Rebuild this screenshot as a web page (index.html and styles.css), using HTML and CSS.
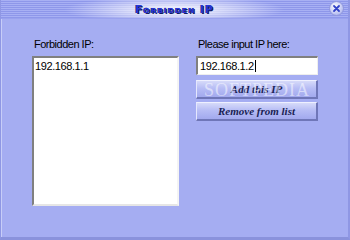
FILE: index.html
```html
<!DOCTYPE html>
<html>
<head>
<meta charset="utf-8">
<link rel="stylesheet" href="styles.css">
</head>
<body>
<div class="window">
  <div class="titlebar">
    <span class="title">Forbidden IP</span>
    <span class="close"><svg width="15" height="15" viewBox="0 0 15 15"><defs><radialGradient id="g" cx="40%" cy="35%" r="70%"><stop offset="0" stop-color="#ffffff"/><stop offset="1" stop-color="#aab1ee"/></radialGradient></defs><circle cx="7.5" cy="7.5" r="7" fill="url(#g)" stroke="#8d95dc" stroke-width="1"/><path d="M5 5 L10 10 M10 5 L5 10" stroke="#3342c8" stroke-width="1.8" stroke-linecap="round"/></svg></span>
  </div>
  <div class="content">
    <div class="col-left">
      <div class="label">Forbidden IP:</div>
      <div class="listbox"><div class="item">192.168.1.1</div></div>
    </div>
    <div class="col-right">
      <div class="label">Please input IP here:</div>
      <div class="input"><span>192.168.1.2</span><span class="caret"></span></div>
      <div class="btn">Add this IP</div>
      <div class="btn">Remove from list</div>
      <div class="watermark">SOFTPEDIA</div>
    </div>
  </div>
</div>
</body>
</html>
```
FILE: styles.css
```css
html, body { margin: 0; padding: 0; }
body { width: 350px; height: 240px; overflow: hidden; background: #a5adf2; font-family: "Liberation Sans", Arial, sans-serif; }
.window {
  box-sizing: border-box; width: 350px; height: 240px; background: #a5adf2;
  border-left: 1px solid #8f97e4; border-right: 2px solid #8f97e4; border-bottom: 3px solid #8a92dc;
  box-shadow: inset 1px 0 0 #c8cdf8;
  display: flex; flex-direction: column;
}
.titlebar {
  position: relative; height: 18px; display: flex; justify-content: center; align-items: center;
  background:
    radial-gradient(ellipse 110px 14px at 50% 55%, rgba(255,255,255,0.95), rgba(255,255,255,0.55) 45%, rgba(255,255,255,0) 100%),
    repeating-linear-gradient(to bottom, #a8b0f4 0px, #a8b0f4 1px, #8e97ea 1px, #8e97ea 2px);
  border-bottom: 1px solid #9aa2ee;
}
.title {
  font-family: "DejaVu Sans", sans-serif; font-weight: bold; font-variant: small-caps;
  font-size: 10px; letter-spacing: 1px; color: #2a36d8;
  text-shadow: 1px 1px 0 #101a60, -0.5px -0.5px 0 #101a60;
  transform: scaleX(1.05); margin-top: 1px;
}
.close { position: absolute; right: 4px; top: 1px; width: 15px; height: 15px; }
.content { display: flex; padding: 19px 0 0 31px; gap: 17px; }
.label { font-size: 11px; line-height: 13px; color: #000; letter-spacing: -0.5px; margin-bottom: 5px; padding-left: 2px; }
.listbox {
  box-sizing: border-box; width: 147px; height: 150px; background: #fff;
  border-top: 2px solid #808080; border-left: 2px solid #808080;
  border-right: 2px solid #f4f4f4; border-bottom: 2px solid #e6e6e6;
}
.item { font-size: 11px; line-height: 13px; padding: 2px 0 0 1px; letter-spacing: -0.4px; }
.col-right { position: relative; width: 122px; }
.input {
  box-sizing: border-box; width: 122px; height: 19px; background: #fff; display: flex; align-items: center;
  border-top: 2px solid #808080; border-left: 2px solid #808080; border-right: 1px solid #eee; border-bottom: 1px solid #eee;
  font-size: 11px; padding-left: 2px; letter-spacing: -0.4px; margin-bottom: 5px;
}
.caret { width: 1px; height: 12px; background: #000; margin-left: 1px; }
.btn {
  box-sizing: border-box; width: 122px; height: 19px; margin-bottom: 3px;
  display: flex; justify-content: center; align-items: center;
  background: linear-gradient(to bottom, #d6daf9 0%, #b7bdf5 45%, #a2a9ee 100%);
  border-top: 1px solid #eef0ff; border-left: 1px solid #e4e7fd;
  border-right: 2px solid #6f76b8; border-bottom: 2px solid #6f76b8;
  font-family: "Liberation Serif", "Times New Roman", serif; font-weight: bold; font-style: italic;
  font-size: 11px; color: #1a1f55;
}
.watermark {
  position: absolute; left: 0; top: 44px; width: 122px; text-align: center;
  font-family: "Liberation Serif", serif; font-size: 18px; line-height: 16px; letter-spacing: 1px; color: rgba(255,255,255,0.5);
  pointer-events: none;
}
```
